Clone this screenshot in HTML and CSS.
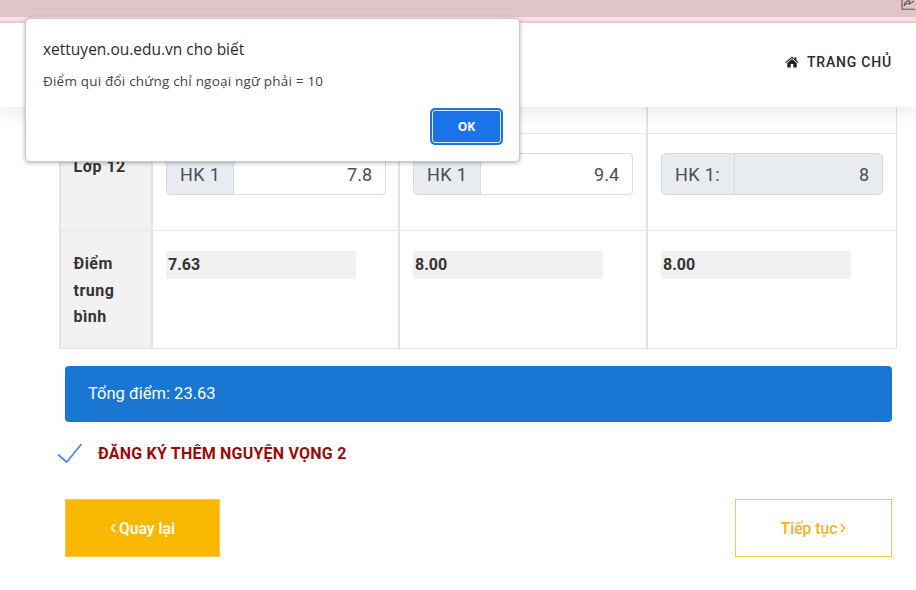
FILE: index.html
```html
<!DOCTYPE html>
<html lang="vi">
<head>
<meta charset="utf-8">
<title>Xét tuyển</title>
<link rel="stylesheet" href="styles.css">
</head>
<body>
<div class="browser-bar">
  <svg class="share" viewBox="0 0 18 14" width="18" height="14" fill="none" stroke="#5d595b" stroke-width="1.1"><path d="M1 0V9.200H14M3 6C4 2 6 .5 8.500 1V4L13 1M3 6C5 3.500 7 3 8.500 4"/></svg>
</div>
<header class="site-header">
  <a class="home">
    <svg viewBox="0 0 14 12" width="14" height="12" fill="#222"><path d="M7 .6 9.600 2.800V1.300h1.800v3L13.600 6.200l-.7.8L7 2.100 1.100 7l-.7-.8z"/><path d="M7 3.100 2.300 7v4.500H5.700V8h2.600v3.500h3.400V7z"/></svg>
    <span>TRANG CHỦ</span>
  </a>
</header>
<main>
  <div class="scores">
    <div class="head short"></div><div class="cell short"></div><div class="cell short"></div><div class="cell short"></div>
    <div class="head">Lớp 12</div>
    <div class="cell"><div class="group"><span class="tag">HK 1</span><span class="value">7.8</span></div></div>
    <div class="cell"><div class="group"><span class="tag">HK 1</span><span class="value">9.4</span></div></div>
    <div class="cell"><div class="group locked"><span class="tag">HK 1:</span><span class="value">8</span></div></div>
    <div class="head">Điểm trung bình</div>
    <div class="cell"><div class="average">7.63</div></div>
    <div class="cell"><div class="average">8.00</div></div>
    <div class="cell"><div class="average">8.00</div></div>
  </div>
  <div class="total">Tổng điểm: 23.63</div>
  <label class="extra">
    <svg viewBox="0 0 26 21" width="26" height="21" fill="none" stroke="#4a8cf5" stroke-width="1.8"><path d="M1 11.500 9.700 19 24.500 1"/></svg>
    <span>ĐĂNG KÝ THÊM NGUYỆN VỌNG 2</span>
  </label>
  <div class="actions">
    <button class="btn back"><svg viewBox="0 0 6 10" width="6" height="10"><path d="M5 1 1.300 5 5 9"/></svg><span>Quay lại</span></button>
    <button class="btn next"><span>Tiếp tục</span><svg viewBox="0 0 6 10" width="6" height="10"><path d="M1 1 4.700 5 1 9"/></svg></button>
  </div>
</main>
<div class="dialog">
  <div class="dialog-title">xettuyen.ou.edu.vn cho biết</div>
  <div class="dialog-text">Điểm qui đổi chứng chỉ ngoại ngữ phải = 10</div>
  <button class="ok">OK</button>
</div>
</body>
</html>
```
FILE: styles.css
```css
* { box-sizing: border-box; }
body {
  margin: 0;
  height: 590px;
  overflow: hidden;
  position: relative;
  background: #fff;
  color: #343434;
  font-family: Roboto, sans-serif;
}
button { font-family: inherit; padding: 0; border-radius: 0; }
svg { display: block; flex: none; }

.browser-bar {
  height: 23px;
  background: linear-gradient(#e1c4c9 17px, #ffdee3 17px, #ffdee3 21px, #e7cbd2 21px);
  display: flex;
  justify-content: flex-end;
  overflow: hidden;
}
.share { margin-right: -3px; }

.site-header {
  height: 84px;
  position: relative;
  display: flex;
  justify-content: flex-end;
  align-items: center;
  padding: 0 24px 6px 0;
  background: #fff;
  box-shadow: 0 0 25px rgba(0, 0, 0, .13);
  clip-path: inset(0 0 -30px 0);
}
.home {
  display: flex;
  align-items: center;
  gap: 8px;
  color: #2b2b2b;
  font-size: 14px;
  font-weight: 500;
  letter-spacing: .8px;
}

.scores {
  display: grid;
  grid-template-columns: 92px 247px 248px 251px;
  grid-template-rows: 27px 97px 118px;
  width: 838px;
  margin-left: 59px;
  border-right: 1px solid #dee2e6;
}
.head, .cell {
  border-left: 2px solid #e0e2e7;
  border-bottom: 1px solid #e4e7ea;
  padding: 19px 13px 19px 13px;
}
.cell:nth-child(4n) { padding-left: 13px; }
.head {
  background: #f1f1f1;
  font-size: 16px;
  font-weight: 700;
  line-height: 26.500px;
  letter-spacing: .5px;
  padding-left: 12.500px;
  padding-top: 20px;
}
.short.short { padding: 0; }
.group {
  display: flex;
  height: 42px;
  width: 220px;
  border: 1px solid #d5dbe1;
  border-radius: 4px;
  overflow: hidden;
  color: #495057;
  font-size: 18px;
  line-height: 41px;
}
.tag {
  padding: 0 13px;
  background: #e8ecef;
  border-right: 1px solid #d5dbe1;
  letter-spacing: .4px;
}
.value { flex: 1; padding-right: 13px; text-align: right; }
.locked { width: 222px; }
.locked .tag { padding-right: 14px; }
.locked .value { background: #e8ecef; }
.average {
  width: 190px;
  height: 28px;
  margin-top: 1px;
  padding-left: 2px;
  background: #f1f1f1;
  font-size: 16px;
  font-weight: 700;
  line-height: 28px;
}

.total {
  width: 827px;
  height: 56px;
  margin: 17px 0 0 65px;
  padding-left: 23px;
  border-radius: 4px;
  background: #1976d3;
  color: #fff;
  font-size: 16.500px;
  line-height: 55px;
}
.extra {
  display: flex;
  align-items: center;
  gap: 15px;
  height: 24px;
  margin: 19px 0 0 57px;
  color: #980b0b;
  font-size: 16px;
  font-weight: 700;
  letter-spacing: .22px;
}
.actions {
  display: flex;
  justify-content: space-between;
  width: 827px;
  margin: 34px 0 0 65px;
}
.btn {
  display: flex;
  justify-content: center;
  align-items: center;
  gap: 3px;
  height: 58px;
  border: 1px solid #fac74a;
  font-size: 15.700px;
  font-weight: 500;
}
.btn path { fill: none; stroke: currentColor; stroke-width: 1.5; }
.back { width: 155px; background: #f9b700; color: #fff; font-weight: 600; }
.next { width: 157px; background: #fff; color: #f9b01c; }

.dialog {
  position: absolute;
  left: 25px;
  top: 18px;
  width: 495px;
  height: 144px;
  padding: 19px 18px 15px 17px;
  display: flex;
  flex-direction: column;
  background: #fff;
  border: 1px solid #c9c9cb;
  border-radius: 5px;
  box-shadow: 0 1px 4px rgba(0, 0, 0, .3);
  font-family: "Open Sans", sans-serif;
}
.dialog-title { font-size: 15.500px; line-height: 22px; color: #2b2b2b; white-space: nowrap; }
.dialog-text { margin-top: 12px; font-size: 13.500px; letter-spacing: .2px; line-height: 18px; color: #444; white-space: nowrap; }
.ok {
  flex: none;
  width: 73px;
  height: 37px;
  margin: 18px -2px 0 0;
  align-self: flex-end;
  border: 2px solid #1a73e8;
  border-radius: 5px;
  background: #1a73e8;
  box-shadow: inset 0 0 0 1px #d7e6fb;
  color: #fff;
  font-size: 12px;
  font-weight: 700;
}
```
